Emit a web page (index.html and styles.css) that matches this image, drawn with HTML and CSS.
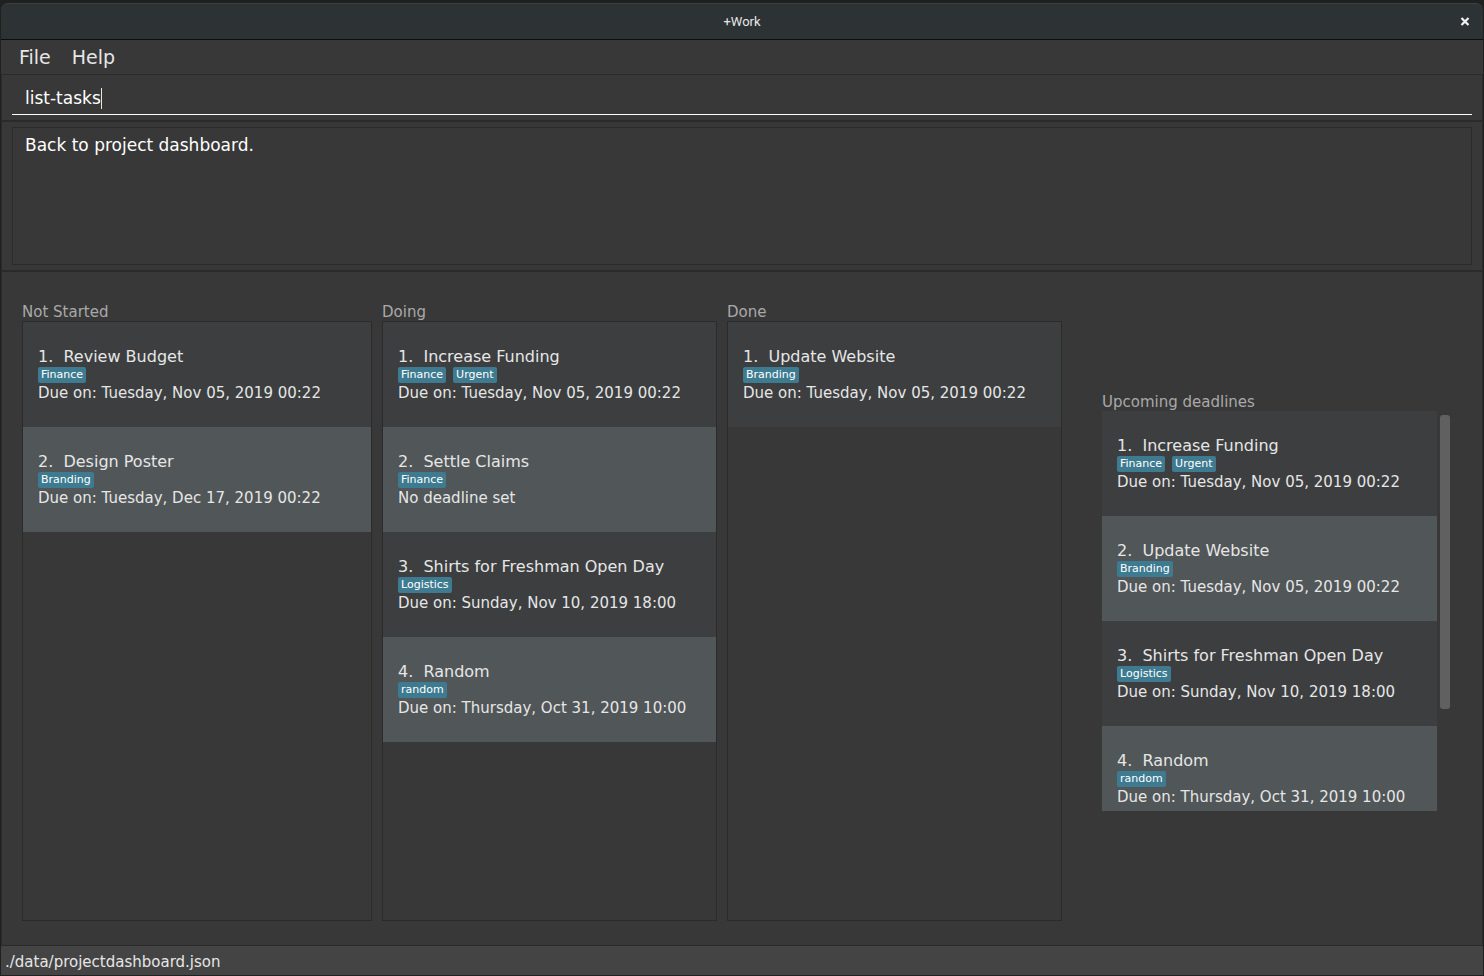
FILE: index.html
```html
<!DOCTYPE html>
<html lang="en">
<head>
<meta charset="utf-8">
<title>+Work</title>
<link rel="stylesheet" href="styles.css">
</head>
<body>
<div class="window">
  <header class="titlebar">
    <h1 class="titlebar-name">+Work</h1>
    <button class="close" type="button" aria-label="Close">
      <svg width="10" height="10" viewBox="0 0 10 10" aria-hidden="true"><path d="M1.5 1 8.5 8M8.5 1 1.5 8" fill="none" stroke="#f2f2f2" stroke-width="2.2"/></svg>
    </button>
  </header>
  <nav class="menubar">
    <button class="menu" type="button">File</button>
    <button class="menu" type="button">Help</button>
  </nav>
  <section class="command">
    <div class="command-field">
      <input class="command-input" type="text" value="list-tasks" aria-label="Command" size="8">
      <span class="caret"></span>
    </div>
  </section>
  <section class="result">
    <output class="result-box">Back to project dashboard.</output>
  </section>
  <main class="board">
    <section class="column">
      <h2 class="column-name">Not Started</h2>
      <ul class="list framed">
        <li class="card"><h3 class="task">1.&nbsp; Review Budget</h3><div class="tags"><span class="tag">Finance</span></div><p class="due">Due on: Tuesday, Nov 05, 2019 00:22</p></li>
        <li class="card"><h3 class="task">2.&nbsp; Design Poster</h3><div class="tags"><span class="tag">Branding</span></div><p class="due">Due on: Tuesday, Dec 17, 2019 00:22</p></li>
      </ul>
    </section>
    <section class="column">
      <h2 class="column-name">Doing</h2>
      <ul class="list framed">
        <li class="card"><h3 class="task">1.&nbsp; Increase Funding</h3><div class="tags"><span class="tag">Finance</span><span class="tag">Urgent</span></div><p class="due">Due on: Tuesday, Nov 05, 2019 00:22</p></li>
        <li class="card"><h3 class="task">2.&nbsp; Settle Claims</h3><div class="tags"><span class="tag">Finance</span></div><p class="due">No deadline set</p></li>
        <li class="card"><h3 class="task">3.&nbsp; Shirts for Freshman Open Day</h3><div class="tags"><span class="tag">Logistics</span></div><p class="due">Due on: Sunday, Nov 10, 2019 18:00</p></li>
        <li class="card"><h3 class="task">4.&nbsp; Random</h3><div class="tags"><span class="tag">random</span></div><p class="due">Due on: Thursday, Oct 31, 2019 10:00</p></li>
      </ul>
    </section>
    <section class="column">
      <h2 class="column-name">Done</h2>
      <ul class="list framed">
        <li class="card"><h3 class="task">1.&nbsp; Update Website</h3><div class="tags"><span class="tag">Branding</span></div><p class="due">Due on: Tuesday, Nov 05, 2019 00:22</p></li>
      </ul>
    </section>
    <section class="column deadlines">
      <h2 class="column-name">Upcoming deadlines</h2>
      <div class="scroller">
        <ul class="list">
          <li class="card"><h3 class="task">1.&nbsp; Increase Funding</h3><div class="tags"><span class="tag">Finance</span><span class="tag">Urgent</span></div><p class="due">Due on: Tuesday, Nov 05, 2019 00:22</p></li>
          <li class="card"><h3 class="task">2.&nbsp; Update Website</h3><div class="tags"><span class="tag">Branding</span></div><p class="due">Due on: Tuesday, Nov 05, 2019 00:22</p></li>
          <li class="card"><h3 class="task">3.&nbsp; Shirts for Freshman Open Day</h3><div class="tags"><span class="tag">Logistics</span></div><p class="due">Due on: Sunday, Nov 10, 2019 18:00</p></li>
          <li class="card"><h3 class="task">4.&nbsp; Random</h3><div class="tags"><span class="tag">random</span></div><p class="due">Due on: Thursday, Oct 31, 2019 10:00</p></li>
        </ul>
        <div class="track"><div class="thumb"></div></div>
      </div>
    </section>
  </main>
  <footer class="status">./data/projectdashboard.json</footer>
</div>
</body>
</html>
```

FILE: styles.css
```css
* {
  box-sizing: border-box;
}

body {
  margin: 0;
  background: #1f2121;
  color: #e6e6e6;
  font-family: "DejaVu Sans", sans-serif;
  font-size: 15px;
}

h1, h2, h3, p, ul {
  margin: 0;
  padding: 0;
  font-weight: normal;
  list-style: none;
}

button, input {
  border: 0;
  padding: 0;
  background: none;
  color: inherit;
  font: inherit;
}

.window {
  display: flex;
  flex-direction: column;
  min-height: 100vh;
  padding: 3px 1px 1px;
}

.titlebar {
  display: grid;
  grid-template-columns: 1fr auto 1fr;
  align-items: center;
  height: 37px;
  padding: 0 13px;
  border-top: 1px solid #3b4042;
  border-bottom: 1px solid #0c0e0e;
  border-radius: 7px 7px 0 0;
  background: #2d3234;
}

.titlebar-name {
  grid-column: 2;
  font-family: Roboto, sans-serif;
  font-size: 13px;
  line-height: 16px;
}

.close {
  display: flex;
  justify-self: end;
}

.menubar {
  display: flex;
  gap: 21px;
  height: 34px;
  padding: 0 18px;
  background: #383838;
}

.menu {
  font-size: 19px;
  line-height: 34px;
}

.command,
.result,
.board {
  border: 1px solid #2b2b2b;
  background: #383838;
}

.command {
  padding: 5px 10px;
}

.command-field {
  display: flex;
  align-items: center;
  height: 35px;
  padding: 2px 13px 0;
  border-bottom: 1px solid #fff;
}

.command-input {
  field-sizing: content;
  height: 24px;
  color: #fff;
  font-size: 17px;
  outline: none;
}

.caret {
  width: 1px;
  height: 21px;
  background: #e6e6e6;
}

.result {
  padding: 5px 10px;
}

.result-box {
  display: block;
  height: 138px;
  padding: 7px 12px;
  border: 1px solid #2b2b2b;
  color: #fff;
  font-size: 17px;
  line-height: 20px;
}

.board {
  flex: 1;
  display: grid;
  grid-template-columns: 350fr 335fr 335fr 390fr;
  gap: 10px;
  padding: 31px 20px 24px;
}

.column {
  display: flex;
  flex-direction: column;
  min-width: 0;
}

.column-name {
  color: #a9a9a9;
  font-size: 15px;
  line-height: 18px;
}

.list {
  flex: 1;
  min-width: 0;
}

.framed {
  border: 1px solid #2b2b2b;
}

.card {
  height: 105px;
  padding: 25px 15px 0;
  background: #3c3e3f;
}

.card:nth-child(even) {
  background: #515658;
}

.task {
  font-size: 16px;
  line-height: 20px;
}

.tags {
  display: flex;
  gap: 7px;
}

.tag {
  padding: 0 3px;
  border-radius: 2px;
  background: #3e7b91;
  color: #fff;
  font-size: 11px;
  line-height: 16px;
}

.due {
  font-size: 15px;
  line-height: 20px;
}

.deadlines {
  justify-content: center;
  padding: 0 12px 20px 30px;
}

.scroller {
  display: flex;
  gap: 3px;
  height: 400px;
  overflow: hidden;
}

.track {
  width: 10px;
  padding: 4px 0;
}

.thumb {
  height: 75%;
  border-radius: 3px;
  background: #606060;
}

.status {
  padding: 7px 4px 4px;
  background: #444;
  line-height: 18px;
}
```
